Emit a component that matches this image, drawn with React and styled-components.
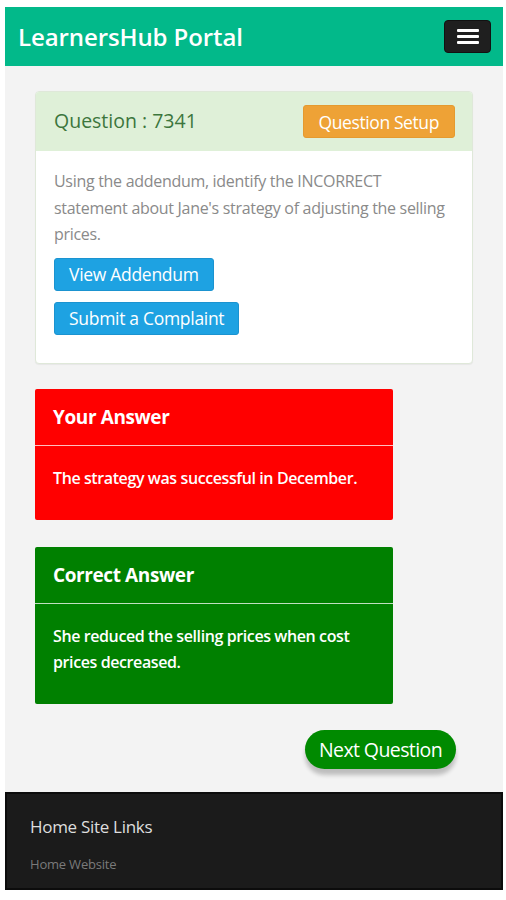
import React from 'react';
import styled, { createGlobalStyle } from 'styled-components';

const GlobalStyle = createGlobalStyle`
    html, body {
        margin: 0;
        padding: 0;
        background: #ffffff;
    }
    body {
        font-family: "Open Sans", "Liberation Sans", sans-serif;
    }
    * {
        box-sizing: border-box;
    }
`

function QuestionPanel({ number, text }) {
    return (
        <Panel>
            <PanelHeading>
                <QuestionTitle>Question : {number}</QuestionTitle>
                <SetupButton>Question Setup</SetupButton>
            </PanelHeading>
            <PanelBody>
                <QuestionText>{text}</QuestionText>
                <BlueButton>View Addendum</BlueButton>
                <BlueButton>Submit a Complaint</BlueButton>
            </PanelBody>
        </Panel>
    )
}

function AnswerCard({ title, children, tone }) {
    return (
        <Card tone={tone}>
            <CardTitle>{title}</CardTitle>
            <CardBody>{children}</CardBody>
        </Card>
    )
}

export default function App() {
    return (
        <Frame>
            <GlobalStyle />
            <Navbar>
                <Brand>LearnersHub Portal</Brand>
                <MenuToggle aria-label="menu">
                    <Bar />
                    <Bar />
                    <Bar />
                </MenuToggle>
            </Navbar>
            <Content>
                <QuestionPanel
                    number="7341"
                    text="Using the addendum, identify the INCORRECT statement about Jane's strategy of adjusting the selling prices."
                />
                <AnswerCard title="Your Answer" tone="wrong">
                    The strategy was successful in December.
                </AnswerCard>
                <AnswerCard title="Correct Answer" tone="right">
                    She reduced the selling prices when cost prices decreased.
                </AnswerCard>
                <NextRow>
                    <NextButton>Next Question</NextButton>
                </NextRow>
            </Content>
            <Footer>
                <FooterTitle>Home Site Links</FooterTitle>
                <FooterLink>Home Website</FooterLink>
            </Footer>
        </Frame>
    )
}

const Frame = styled.div`
    margin: 7px 3px 10px 5px;
    display: flex;
    flex-direction: column;
`

const Navbar = styled.header`
    height: 59px;
    background: #02b98a;
    display: flex;
    align-items: center;
    justify-content: space-between;
    padding: 0 12px 0 13px;
`

const Brand = styled.div`
    color: #ffffff;
    font-size: 24px;
    font-weight: 600;
    letter-spacing: -0.1px;
`

const MenuToggle = styled.button`
    width: 47px;
    height: 33px;
    background: #1f1f1f;
    border: 1px solid #111;
    border-radius: 4px;
    display: flex;
    flex-direction: column;
    align-items: center;
    justify-content: center;
    gap: 3px;
    padding: 0;
    margin-top: -1px;
`

const Bar = styled.span`
    display: block;
    width: 22px;
    height: 3px;
    border-radius: 1px;
    background: #ffffff;
`

const Content = styled.main`
    background: #f3f3f3;
    padding: 25px 30px 23px 30px;
    display: flex;
    flex-direction: column;
`

const Panel = styled.section`
    background: #ffffff;
    border: 1px solid #dfe8d9;
    border-radius: 4px;
    box-shadow: 0 1px 1px rgba(0, 0, 0, 0.05);
    overflow: hidden;
    margin-bottom: 25px;
`

const PanelHeading = styled.div`
    background: #dff0d8;
    height: 59px;
    display: flex;
    align-items: center;
    justify-content: space-between;
    padding: 0 17px 0 18px;
`

const QuestionTitle = styled.h3`
    margin: 0;
    color: #3c763d;
    font-size: 19.5px;
    font-weight: 400;
    margin-top: -2px;
`

const SetupButton = styled.button`
    font-family: inherit;
    font-size: 17.5px;
    color: #ffffff;
    background: #eea236;
    border: 1px solid #e59a2f;
    border-radius: 3px;
    height: 33px;
    padding: 0 15px;
    letter-spacing: -0.4px;
`

const PanelBody = styled.div`
    padding: 17px 18px 28px 18px;
    display: flex;
    flex-direction: column;
    align-items: flex-start;
    gap: 11px;
`

const QuestionText = styled.p`
    margin: 0 0 -1px 0;
    color: #8a8a8a;
    font-size: 16px;
    line-height: 26.5px;
    letter-spacing: -0.3px;
`

const BlueButton = styled.button`
    font-family: inherit;
    font-size: 17.5px;
    color: #ffffff;
    background: #1ea2e2;
    border: 1px solid #1b93d0;
    border-radius: 3px;
    height: 33px;
    padding: 0 14px;
    letter-spacing: -0.3px;
`

const Card = styled.section`
    width: 358px;
    background: ${p => p.tone === 'wrong' ? '#ff0000' : '#008000'};
    border-radius: 2px;
    margin-bottom: 27px;
    color: #ffffff;
`

const CardTitle = styled.h3`
    margin: 0;
    height: 57px;
    display: flex;
    align-items: center;
    padding: 0 18px;
    font-size: 19px;
    font-weight: 700;
    border-bottom: 1px solid rgba(255, 255, 255, 0.75);
    letter-spacing: -0.4px;
`

const CardBody = styled.div`
    padding: 19px 18px 29px 18px;
    font-size: 16px;
    font-weight: 600;
    line-height: 26px;
    letter-spacing: -0.4px;
`

const NextRow = styled.div`
    display: flex;
    justify-content: flex-end;
    padding-right: 17px;
    margin-top: -1px;
`

const NextButton = styled.button`
    font-family: inherit;
    font-size: 19.5px;
    color: #ffffff;
    background: #008a00;
    border: none;
    border-radius: 20px;
    height: 39px;
    padding: 0 14px;
    letter-spacing: -0.6px;
    box-shadow: 0 6px 4px rgba(0, 0, 0, 0.22);
`

const Footer = styled.footer`
    background: #1b1b1b;
    border: 2px solid #0c0c0c;
    height: 98px;
    padding: 21px 24px 0 23px;
`

const FooterTitle = styled.div`
    color: #dedede;
    font-size: 17px;
    letter-spacing: -0.3px;
`

const FooterLink = styled.div`
    margin-top: 17px;
    color: #7a7a7a;
    font-size: 13px;
    letter-spacing: -0.2px;
`
